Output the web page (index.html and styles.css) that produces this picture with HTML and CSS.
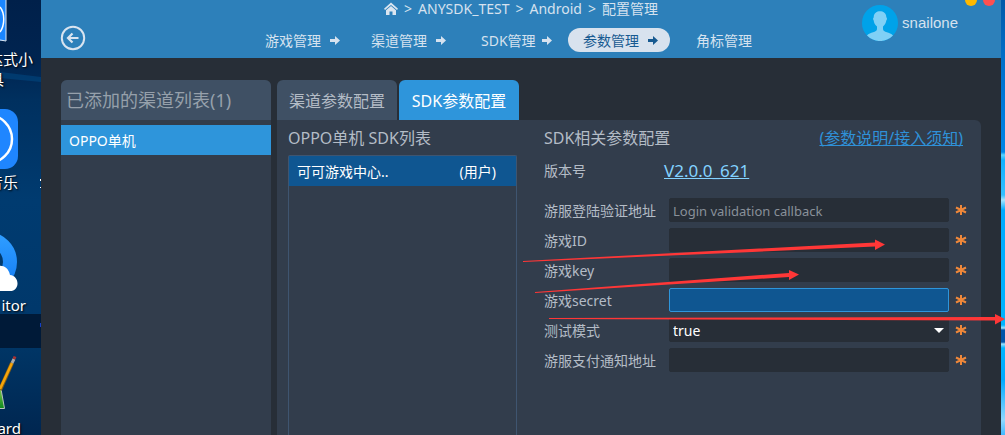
FILE: index.html
```html
<!DOCTYPE html>
<html lang="zh-CN">
<head>
<meta charset="utf-8">
<title>AnySDK</title>
<link rel="stylesheet" href="styles.css">
</head>
<body class="desktop">
<aside class="wallpaper" aria-label="桌面">
  <svg class="shortcuts" width="41" height="435" viewBox="0 0 41 435" aria-hidden="true">
    <defs>
      <linearGradient id="leaf" x1="0" y1="0" x2="0" y2="1"><stop offset="0" stop-color="#b6e35c"/><stop offset="1" stop-color="#0c8a1d"/></linearGradient>
      <linearGradient id="ring" x1="0" y1="0" x2="0" y2="1"><stop offset="0" stop-color="#2d9bff"/><stop offset="1" stop-color="#147df5"/></linearGradient>
    </defs>
    <path d="M0 72L41 77V82L0 78Z" fill="#004884" opacity=".55"/>
    <path d="M0 0H6V40.500H0Z" fill="#1a86ff"/>
    <path d="M6 0V41M6 41L0 40" stroke="#dfeaf5" fill="none"/>
    <path d="M0 7C5 13 5 25 0 32" fill="none" stroke="#fff" stroke-width="1.500"/>
    <rect x="-42" y="109" width="60" height="60" rx="13" fill="#1f86ff"/>
    <circle cx="-12" cy="139" r="24" fill="none" stroke="#fff" stroke-width="2.500"/>
    <circle cx="-13" cy="262" r="23" fill="none" stroke="url(#ring)" stroke-width="14"/>
    <path d="M-8 291V271C-4 263 8 264 10 275C20 276 20 291 10 291Z" fill="#fff"/>
    <path d="M0 314H41V348H0Z" fill="#001a38"/>
    <path d="M40 323h1v4h-1z" fill="#1440c8"/>
    <path d="M40 179h1v2h-1zM40 187h1v1h-1z" fill="#fff"/>
    <path d="M-2 380L1 389L4.500 408.500H-2Z" fill="url(#leaf)" stroke="#b9c4bd"/>
    <path d="M0 390L12 363" stroke="#855f12" stroke-width="4"/>
    <path d="M0 389L12 363" stroke="#f5a50a" stroke-width="2.500"/>
    <path d="M12 363L14 359" stroke="#aaa" stroke-width="3"/>
    <path d="M14 359L15 356.500" stroke="#a83232" stroke-width="3"/>
  </svg>
  <span class="caption caption-regex">达式小</span>
  <span class="caption caption-tool">具</span>
  <span class="caption caption-music">音乐</span>
  <span class="caption caption-editor">itor</span>
  <span class="caption caption-board">ard</span>
</aside>

<div class="window">
  <header class="topbar">
    <button class="back" aria-label="返回">
      <svg width="26" height="26" viewBox="0 0 26 26" fill="none" stroke="#d9e4f0"><circle cx="13" cy="13" r="11.200" stroke-width="2"/><path d="M18.500 13H8.500M12.500 8.500L8 13L12.500 17.500" stroke-width="2.200"/></svg>
    </button>
    <div class="middle">
      <nav class="crumbs" aria-label="路径">
        <a href="#" aria-label="首页"><svg width="14" height="13" viewBox="0 0 14 13"><path d="M0 6.700L7 .5L14 6.700L13 7.900L7 2.900L1 7.900Z" fill="#dbe5f0"/><path d="M2 8.200L7 4.100L12 8.200V13H8.500V9.500H5.500V13H2Z" fill="#dbe5f0"/></svg></a>
        <span>&gt;</span><a href="#">ANYSDK_TEST</a><span>&gt;</span><a href="#">Android</a><span>&gt;</span><a href="#">配置管理</a>
      </nav>
      <nav class="steps" aria-label="步骤">
        <a class="step" href="#">游戏管理<svg class="arrow" viewBox="0 0 10 9"><path d="M0 3H5V0L10 4.500L5 9V6H0Z"/></svg></a>
        <a class="step" href="#">渠道管理<svg class="arrow" viewBox="0 0 10 9"><path d="M0 3H5V0L10 4.500L5 9V6H0Z"/></svg></a>
        <a class="step step-wide" href="#">SDK管理<svg class="arrow" viewBox="0 0 10 9"><path d="M0 3H5V0L10 4.500L5 9V6H0Z"/></svg></a>
        <a class="step step-current" href="#" aria-current="page">参数管理<svg class="arrow" viewBox="0 0 10 9"><path d="M0 3H5V0L10 4.500L5 9V6H0Z"/></svg></a>
        <a class="step step-last" href="#">角标管理</a>
      </nav>
    </div>
    <div class="user">
      <svg width="36" height="36" viewBox="0 0 36 36" aria-hidden="true"><circle cx="18" cy="18" r="18" fill="#00a2e9"/><path d="M5 30.500C8 27 15 27.500 15 24V21.500C12.500 19.500 12 17.500 11.700 15.500C10.800 14.500 11 12.500 11.800 12.500C11 4 25 4 24.300 12.500C25.200 12.500 25.200 14.500 24.300 15.500C24 17.500 23.300 19.500 21 21.500V24C21 27.500 28 27 31 30.500A18 18 0 0 1 5 30.500Z" fill="#7fd0f6"/></svg>
      <span>snailone</span>
    </div>
    <div class="controls">
      <button class="dot dot-min" aria-label="最小化"></button>
      <button class="dot dot-close" aria-label="关闭"></button>
    </div>
  </header>

  <main class="workspace">
    <section class="channels">
      <h2 class="channels-title">已添加的渠道列表(1)</h2>
      <button class="channel">OPPO单机</button>
    </section>

    <section class="config">
      <div class="tabs" role="tablist">
        <button class="tab" role="tab" aria-selected="false">渠道参数配置</button>
        <button class="tab tab-active" role="tab" aria-selected="true">SDK参数配置</button>
      </div>
      <div class="panel">
        <div class="sdks">
          <h3 class="heading">OPPO单机 SDK列表</h3>
          <div class="sdk-list">
            <button class="sdk"><span>可可游戏中心..</span><span>(用户)</span></button>
          </div>
        </div>
        <form class="params">
          <div class="params-head">
            <h3 class="heading">SDK相关参数配置</h3>
            <a class="help" href="#">(参数说明/接入须知)</a>
          </div>
          <div class="version"><span>版本号</span><a href="#">V2.0.0_621</a></div>
          <div class="field"><label for="login">游服登陆验证地址</label><input id="login" type="text" placeholder="Login validation callback"><svg class="star" viewBox="0 0 12 12"><path d="M6 1V11M1 3.500L11 8.500M11 3.500L1 8.500"/></svg></div>
          <div class="field"><label for="gid">游戏ID</label><input id="gid" type="text"><svg class="star" viewBox="0 0 12 12"><path d="M6 1V11M1 3.500L11 8.500M11 3.500L1 8.500"/></svg></div>
          <div class="field"><label for="gkey">游戏key</label><input id="gkey" type="text"><svg class="star" viewBox="0 0 12 12"><path d="M6 1V11M1 3.500L11 8.500M11 3.500L1 8.500"/></svg></div>
          <div class="field"><label for="gsecret">游戏secret</label><input id="gsecret" class="active" type="text"><svg class="star" viewBox="0 0 12 12"><path d="M6 1V11M1 3.500L11 8.500M11 3.500L1 8.500"/></svg></div>
          <div class="field"><label for="mode">测试模式</label><span class="select"><select id="mode"><option>true</option><option>false</option></select></span><svg class="star" viewBox="0 0 12 12"><path d="M6 1V11M1 3.500L11 8.500M11 3.500L1 8.500"/></svg></div>
          <div class="field"><label for="pay">游服支付通知地址</label><input id="pay" type="text"><svg class="star" viewBox="0 0 12 12"><path d="M6 1V11M1 3.500L11 8.500M11 3.500L1 8.500"/></svg></div>
        </form>
      </div>
    </section>
  </main>
</div>
<div class="edge"></div>

<svg class="marks" width="1005" height="435" viewBox="0 0 1005 435" fill="#ff3737" aria-hidden="true">
  <path d="M523 261L875 242.500V239.500L885 244.500L875 250V246.500L523 262Z"/>
  <path d="M535 292L789 273V270L799 274.500L789 280V277L535 293Z"/>
  <path d="M549 318L995 317V314L1005 319L995 324.500V320.500L549 319Z"/>
</svg>
</body>
</html>
```
FILE: styles.css
```css
* { box-sizing: border-box; }

.desktop {
  margin: 0;
  min-height: 100vh;
  display: grid;
  grid-template-columns: 41px 1fr 4px;
  position: relative;
  overflow: hidden;
  font: 14px/20px "Noto Sans", "Noto Sans CJK SC", sans-serif;
  color: #b4bcc6;
}
a { color: inherit; text-decoration: none; }
h2, h3 { margin: 0; font-weight: 400; }
button, input, select { font: inherit; color: inherit; border: 0; margin: 0; }
button { background: none; padding: 0; cursor: pointer; text-align: left; }

/* Desktop behind the window */
.wallpaper {
  position: relative;
  overflow: hidden;
  background: linear-gradient(#00204a 0, #002450 60px, #00305f 100px, #003b70 200px, #00386b 310px, #003565 350px, #002650 435px);
}
.shortcuts { position: absolute; top: 0; left: 0; }
.caption {
  position: absolute;
  color: #fff;
  font-size: 15px;
  white-space: nowrap;
  text-shadow: 1px 1px 2px #000;
}
.caption-regex { right: 8px; top: 49px; }
.caption-tool { right: 37px; top: 69px; }
.caption-music { right: 23px; top: 172px; }
.caption-editor { right: 15px; top: 295px; }
.caption-board { right: 20px; top: 418px; }
.edge {
  background: linear-gradient(#0059a8 0, #006cc4 50px, #0078d8 100px, #0085e6 152px, #5cd4ff 155px, #10b0ff 160px, #35c0ff 195px, #a8e5ff 200px, #00aaff 210px, #00b4ff 325px, #a0e6ff 328px, #0054a8 330px, #0054a8 342px, #9de2ff 344px, #00b4ff 348px, #00aaff 380px, #8fd8ff 420px, #40b8ff 435px);
}

.window { display: flex; flex-direction: column; background: #272e37; min-width: 0; }

/* Header */
.topbar {
  position: relative;
  display: grid;
  grid-template-columns: 1fr auto 1fr;
  height: 58px;
  background: #2d80ba;
  color: #d6e2ef;
}
.back { align-self: end; justify-self: start; margin: 0 0 7px 19px; height: 26px; }
.back svg { display: block; }
.crumbs { display: flex; justify-content: center; align-items: center; gap: 6px; height: 18px; }
.crumbs svg { display: block; margin-bottom: 2px; }
.steps { display: flex; gap: 4px; margin-top: 10px; padding-right: 16px; }
.step {
  display: flex;
  align-items: center;
  justify-content: space-between;
  width: 102px;
  height: 24px;
  padding: 1px 12px 0 15px;
  border-radius: 12px;
  white-space: nowrap;
}
.step-wide { padding-left: 19px; }
.step-current { background: #d8e2ee; color: #175a91; }
.step-last { justify-content: center; padding: 1px 2px 0 0; }
.arrow { width: 10px; height: 9px; fill: currentColor; }
.user {
  display: flex;
  align-items: center;
  gap: 4px;
  justify-self: end;
  align-self: start;
  margin: 5px 43px 0 0;
  font: 15px/20px "Liberation Sans", sans-serif;
}
.controls { position: absolute; right: 6px; top: -6px; display: flex; gap: 6px; }
.dot { width: 12px; height: 12px; border-radius: 50%; }
.dot-min { background: #ffb900; }
.dot-close { background: #ff5050; }

/* Workspace */
.workspace { flex: 1; display: grid; grid-template-columns: 210px 1fr; gap: 6px; padding: 22px 20px 0; }
.channels { background: #323d4c; border-radius: 6px 6px 0 0; }
.channels-title {
  height: 40px;
  margin-bottom: 5px;
  padding-left: 5px;
  border-radius: 6px 6px 0 0;
  background: #3f5064;
  color: #96a0ab;
  font-size: 18px;
  line-height: 40px;
}
.channel { width: 100%; height: 30px; padding: 2px 0 0 8px; background: #2e95db; color: #fff; }
.config { display: flex; flex-direction: column; }
.tabs { display: flex; gap: 2px; }
.tab {
  width: 120px;
  height: 40px;
  padding-top: 2px;
  border-radius: 6px 6px 0 0;
  background: #3f5064;
  font-size: 16px;
  text-align: center;
}
.tab-active { background: #2e95db; color: #fff; }
.panel {
  flex: 1;
  display: grid;
  grid-template-columns: 229px 1fr;
  gap: 27px;
  padding: 0 14px 0 11px;
  border-radius: 0 6px 0 0;
  background: #323d4c;
}
.heading { height: 35px; font-size: 16px; line-height: 37px; }
.sdks { display: flex; flex-direction: column; }
.sdk-list { flex: 1; border: 1px solid #3f5570; border-bottom: 0; border-radius: 2px 2px 0 0; }
.sdk {
  display: flex;
  justify-content: space-between;
  align-items: center;
  width: 100%;
  height: 30px;
  padding: 2px 20px 0 8px;
  background: #0f5691;
  color: #fff;
}

/* Parameter form */
.params { display: flex; flex-direction: column; gap: 6px; }
.params-head { display: flex; justify-content: space-between; height: 29px; }
.help {
  padding-right: 4px;
  color: #2f91d8;
  font-size: 16px;
  line-height: 37px;
  text-decoration: underline;
}
.version { display: grid; grid-template-columns: 120px 1fr; align-items: center; height: 32px; margin-bottom: 5px; }
.version a {
  justify-self: start;
  color: #83d2ff;
  font-size: 17px;
  text-decoration: underline;
  text-decoration-skip-ink: none;
}
.help { text-decoration-skip-ink: none; }
.field { display: grid; grid-template-columns: 125px 1fr 18px; align-items: center; height: 24px; }
.field label { padding-top: 2px; }
.field input, .field select {
  display: block;
  width: 100%;
  height: 24px;
  padding: 0 3px;
  border: 1px solid #272e37;
  border-radius: 2px;
  background: #272e37;
  color: #fff;
}
.field input { font-size: 13px; padding-top: 2px; }
.field input::placeholder { color: #89919a; opacity: 1; }
.field input.active { background: #0f5691; border-color: #2e95db; }
.select { position: relative; }
.field select { appearance: none; padding: 2px 3px 0; }
.select::after {
  content: "";
  position: absolute;
  right: 5px;
  top: 10px;
  border: 5px solid transparent;
  border-top-color: #fff;
  border-bottom: 0;
  pointer-events: none;
}
.star { width: 12px; height: 12px; justify-self: end; stroke: #f0883a; stroke-width: 2; fill: none; }

.marks { position: absolute; top: 0; left: 0; pointer-events: none; }
```
